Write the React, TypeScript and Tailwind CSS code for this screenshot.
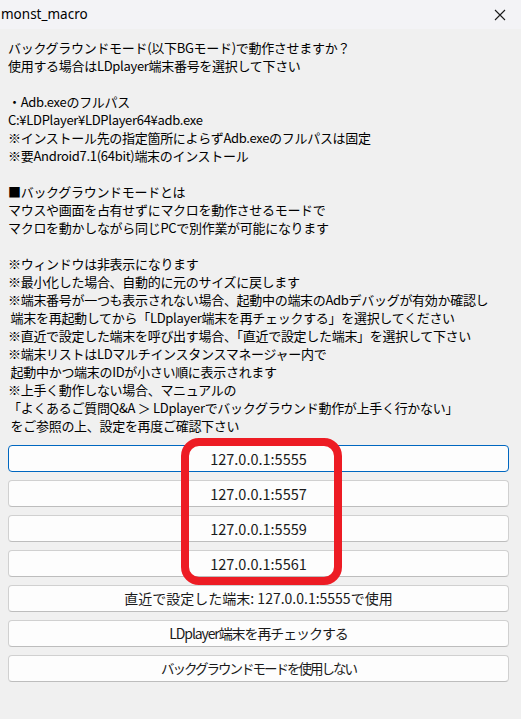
import React from "react";

const lines: string[] = [
  "バックグラウンドモード(以下BGモード)で動作させますか？",
  "使用する場合はLDplayer端末番号を選択して下さい",
  "",
  "・Adb.exeのフルパス",
  "C:¥LDPlayer¥LDPlayer64¥adb.exe",
  "※インストール先の指定箇所によらずAdb.exeのフルパスは固定",
  "※要Android7.1(64bit)端末のインストール",
  "",
  "■バックグラウンドモードとは",
  "マウスや画面を占有せずにマクロを動作させるモードで",
  "マクロを動かしながら同じPCで別作業が可能になります",
  "",
  "※ウィンドウは非表示になります",
  "※最小化した場合、自動的に元のサイズに戻します",
  "※端末番号が一つも表示されない場合、起動中の端末のAdbデバッグが有効か確認し",
  " 端末を再起動してから「LDplayer端末を再チェックする」を選択してください",
  "※直近で設定した端末を呼び出す場合、「直近で設定した端末」を選択して下さい",
  "※端末リストはLDマルチインスタンスマネージャー内で",
  " 起動中かつ端末のIDが小さい順に表示されます",
  "※上手く動作しない場合、マニュアルの",
  "「よくあるご質問Q&A ＞ LDplayerでバックグラウンド動作が上手く行かない」",
  " をご参照の上、設定を再度ご確認下さい",
];

const buttons: { label: string; cls: string }[] = [
  { label: "127.0.0.1:5555", cls: "text-[14.5px]" },
  { label: "127.0.0.1:5557", cls: "text-[14.5px]" },
  { label: "127.0.0.1:5559", cls: "text-[14.5px]" },
  { label: "127.0.0.1:5561", cls: "text-[14.5px]" },
  { label: "直近で設定した端末: 127.0.0.1:5555で使用", cls: "text-[14px]" },
  { label: "LDplayer端末を再チェックする", cls: "text-[14px] tracking-[-1.1px]" },
  { label: "バックグラウンドモードを使用しない", cls: "text-[13.5px] tracking-[-2px]" },
];

export default function App() {
  return (
    <div
      className="w-[521px] h-[719px] bg-[#f0f0f0] flex flex-col overflow-hidden text-black"
      style={{ fontFamily: '"Noto Sans CJK JP", "Noto Sans", sans-serif' }}
    >
      <div className="h-[29px] bg-[#f3f3f6] flex items-center justify-between pl-[1px] pr-[15px] shrink-0">
        <span className="text-[13.5px] leading-none font-['Noto_Sans',sans-serif]">monst_macro</span>
        <svg width="12" height="12" viewBox="0 0 12 12">
          <path d="M1 1 L11 11 M11 1 L1 11" stroke="#1a1a1a" strokeWidth="1.1" fill="none" />
        </svg>
      </div>
      <div className="pt-[10px] pl-[8px] pr-[4px] text-[13px] leading-[18px] tracking-[-0.3px]">
        {lines.map((l, i) => (
          <div key={i} className="h-[18px] whitespace-pre">
            {l}
          </div>
        ))}
      </div>
      <div className="relative mt-[10px] ml-[8px] w-[501px] flex flex-col gap-[8px]">
        {buttons.map((b, i) => (
          <div
            key={i}
            className={
              i === 0
                ? "h-[27px] rounded-[4px] bg-[#fdfdfd] border border-[#0067c0] flex items-center justify-center text-[#1a1a1a] " + b.cls
                : "h-[27px] rounded-[4px] bg-[#fdfdfd] border border-[#d0d0d0] border-b-[#bdbdbd] flex items-center justify-center text-[#1a1a1a] " + b.cls
            }
          >
            {b.label}
          </div>
        ))}
        <div className="absolute left-[173px] top-[-7px] w-[161px] h-[147px] border-[8px] border-[#ed1c24] rounded-[18px] pointer-events-none" />
      </div>
    </div>
  );
}
